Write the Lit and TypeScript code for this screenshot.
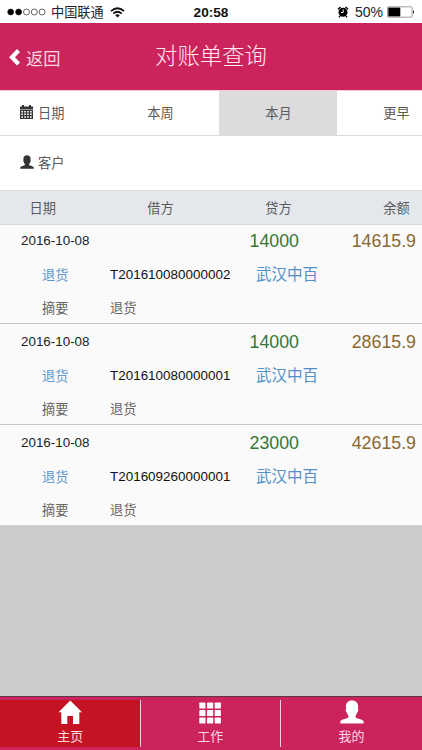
import { LitElement, html, css, svg } from "lit";
import { customElement, property } from "lit/decorators.js";

const PERSON = svg`<path d="M12 .6C8 .6 5.900 3 5.900 6.500c0 1 0 1.700.1 2.500-.6.600-.2 2.800.6 3.300.3 1.300.9 2.300 1.800 3.100v1.800C7.500 18.600 1 19.400.4 21.300V23.600H23.600V21.300C23 19.400 16.500 18.600 15.600 17.200v-1.800c.9-.8 1.500-1.800 1.800-3.100.8-.5 1.200-2.700.6-3.300.1-.8.1-1.500.1-2.500C18.100 3 16 .6 12 .6z"/>`;

@customElement("statement-record")
class StatementRecord extends LitElement {
  @property() balance = "";
  @property() amount = "";
  @property() code = "";

  static styles = css`
    :host { display: block; box-sizing: border-box; height: 101px; padding-top: 1px; border-bottom: 1px solid #c6c6c6; background: #fafafa; font-weight: 400; }
    .line { display: grid; height: 33.3px; align-items: center; white-space: nowrap; }
    .top { grid-template-columns: 228.500px 1fr auto; padding: 1px 6px 0 21px; }
    .mid { grid-template-columns: 68px 146px 1fr; padding-left: 42px; }
    .date { font-size: 13.4px; color: #222; padding-bottom: 2px; }
    .money { font-size: 17.8px; color: #347638; }
    .sum { font-size: 17.8px; color: #89682f; text-align: right; }
    .link { font-size: 13.200px; color: #5b96cc; padding-bottom: 1px; }
    .code { font-size: 13.4px; letter-spacing: .03px; color: #111; padding-bottom: 1px; }
    .name { font-size: 15.5px; color: #5290c8; padding-bottom: 3px; }
    .note { font-size: 13.2px; color: #666; padding-bottom: 2px; }
  `;

  render() {
    return html`
      <div class="line top">
        <span class="date">2016-10-08</span>
        <span class="money">${this.amount}</span>
        <span class="sum">${this.balance}</span>
      </div>
      <div class="line mid">
        <span class="link">退货</span>
        <span class="code">${this.code}</span>
        <span class="name">武汉中百</span>
      </div>
      <div class="line mid">
        <span class="note">摘要</span>
        <span class="note">退货</span>
      </div>
    `;
  }
}

@customElement("app-root")
class AppRoot extends LitElement {
  static styles = css`
    :host { display: flex; flex-direction: column; width: 422px; height: 750px; overflow: hidden; background: #cbcbcb; color: #5a5a5a;
      font-family: "Liberation Sans", "Noto Sans CJK SC", sans-serif; font-weight: 400; }
    * { box-sizing: border-box; }
    svg { display: block; flex: none; }
    .status { height: 23px; flex: none; display: grid; grid-template-columns: 1fr auto 1fr; align-items: center; background: #fff; color: #222; padding: 1px 7px 0; }
    .carrier, .power { display: flex; align-items: center; font-size: 13.2px; }
    .carrier span { margin: -2px 6px 0 5px; }
    .power { justify-content: flex-end; font-size: 14px; }
    .power span { margin: 0 4px 0 6px; }
    .clock { font-size: 13.6px; font-weight: 700; color: #111; }
    .header { height: 67px; flex: none; display: grid; grid-template-columns: 1fr auto 1fr; align-items: center; background: #cb235c; color: #f8d5e1; }
    .back { display: flex; align-items: center; gap: 5px; font-size: 17.3px; padding: 2px 0 0 9px; }
    .title { font-size: 22.4px; line-height: 30px; font-weight: 300; color: #ffeaf1; }
    .cols { display: grid; flex: none; grid-template-columns: 101.400px 118px 118px 118px; font-size: 13.2px; text-align: center; }
    .cols > div { display: flex; align-items: center; justify-content: center; padding-bottom: 2px; }
    .tabs { height: 46px; background: #fff; border-top: 1px solid #fbc4d6; border-bottom: 1px solid #dcdcdc; }
    .tabs .on { background: #dcdcdc; }
    .cols .lead, .customer { display: flex; align-items: center; justify-content: flex-start; gap: 5px; padding-left: 20px; }
    .customer { height: 54px; flex: none; background: #fff; font-size: 13.2px; gap: 4px; padding-bottom: 2px; }
    .dark { fill: #333; }
    .head { position: relative; z-index: 1; height: 35px; background: #e4e8ec; border-top: 1px solid #dcdfe2; border-bottom: 1px solid #d9d9d9; }
    .cols.head > div { padding-bottom: 0; }
    .cols.head > .first { padding-right: 16px; }
    .records { flex: 1; margin-top: -2px; }
    .records > :last-child { border-bottom-color: #d4d4d4; }
    .nav { height: 54px; flex: none; display: grid; grid-template-columns: 140.500px 140.500px 1fr; background: #cb235c; border-top: 1px solid #5e3547; padding: 3px 0; color: #fad9e4; }
    .item { display: flex; flex-direction: column; align-items: center; border-right: 1px solid #f9d4e0; font-size: 13px; line-height: 20px; gap: 2px; }
    .item svg { fill: #fff; }
    .item.on { background: #c41424; padding-left: 1px; }
    .item:last-child { border-right: 0; }
  `;

  render() {
    return html`
      <div class="status">
        <div class="carrier">
          <svg width="39" height="8" viewBox="0 0 39 8" stroke="#222" stroke-width=".7">
            <circle cx="3.700" cy="4" r="3"/><circle cx="11.600" cy="4" r="3"/>
            <circle cx="19.500" cy="4" r="3" fill="none"/><circle cx="27.300" cy="4" r="3" fill="none"/><circle cx="35.100" cy="4" r="3" fill="none"/>
          </svg>
          <span>中国联通</span>
          <svg width="15" height="11" viewBox="0 0 15 11" fill="none" stroke="#111" stroke-width="1.700">
            <path d="M1 4.200Q7.500-1.700 14 4.200M3.300 6.600Q7.500 2.900 11.700 6.600"/><path d="M5.200 8.300Q7.500 6.400 9.800 8.300L7.500 10.500z" fill="#111" stroke="none"/>
          </svg>
        </div>
        <div class="clock">20:58</div>
        <div class="power">
          <svg width="12" height="12" viewBox="0 0 12 12"><circle cx="6" cy="6.300" r="4.500"/><path d="M1 3.300L3.500 1M11 3.300L8.500 1M3 10l-1 1.300M9 10l1 1.300" stroke="#000" stroke-width="1.400"/><path d="M6.200 3.500v3H3.800" stroke="#fff" fill="none"/></svg>
          <span>50%</span>
          <svg width="28" height="12" viewBox="0 0 28 12"><rect x=".5" y=".8" width="24.500" height="10.400" rx="1.200" fill="#fff" stroke="#888" stroke-width=".8"/><rect x="1.300" y="1.600" width="12" height="8.800"/><path d="M26 4q2 2 0 4z"/></svg>
        </div>
      </div>
      <div class="header">
        <div class="back">
          <svg width="12" height="17" viewBox="0 0 12 17"><path d="M9.500 1.500L3 8.200L9.500 15" fill="none" stroke="#fff" stroke-width="4.200"/></svg>
          <span>返回</span>
        </div>
        <div class="title">对账单查询</div>
      </div>
      <div class="cols tabs">
        <div class="lead">
          <svg class="dark" width="13" height="14" viewBox="0 0 13 14"><path d="M0 1.500h2V0h2v1.500h5V0h2v1.500h2V4.500H0z"/><path fill-rule="evenodd" d="M0 5h13v9H0zM1.300 6v1.500h1.700V6zm2.900 0v1.500h1.700V6zm2.900 0v1.500h1.700V6zm2.900 0v1.500h1.700V6zM1.300 8.600v1.500h1.700V8.600zm2.900 0v1.500h1.700V8.600zm2.900 0v1.500h1.700V8.600zm2.900 0v1.500h1.700V8.600zM1.300 11.200v1.500h1.700v-1.500zm2.900 0v1.500h1.700v-1.500zm2.900 0v1.500h1.700v-1.500zm2.900 0v1.500h1.700v-1.500z"/></svg>
          <span>日期</span>
        </div>
        <div>本周</div><div class="on">本月</div><div>更早</div>
      </div>
      <div class="customer">
        <svg class="dark" width="14" height="14" viewBox="0 0 24 24">${PERSON}</svg>
        <span>客户</span>
      </div>
      <div class="cols head"><div class="first">日期</div><div>借方</div><div>贷方</div><div>余额</div></div>
      <div class="records">
        <statement-record amount="14000" balance="14615.9" code="T201610080000002"></statement-record>
        <statement-record amount="14000" balance="28615.9" code="T201610080000001"></statement-record>
        <statement-record amount="23000" balance="42615.9" code="T201609260000001"></statement-record>
      </div>
      <div class="nav">
        <div class="item on"><svg width="24" height="25" viewBox="0 0 24 25"><path d="M12.300.5L.5 12.300H3.300V24H9.300v-8h5.700v8H21.300V12.300H24z"/></svg>主页</div>
        <div class="item"><svg width="24" height="25" viewBox="0 0 24 25">${[2, 9.5, 17].map(y => [1.3, 9, 16.7].map(x => svg`<rect x=${x} y=${y + 0.4} width="6.200" height="6.200" rx=".9"/>`))}</svg>工作</div>
        <div class="item"><svg width="24" height="25" viewBox="0 0 24 25">${PERSON}</svg>我的</div>
      </div>
    `;
  }
}
